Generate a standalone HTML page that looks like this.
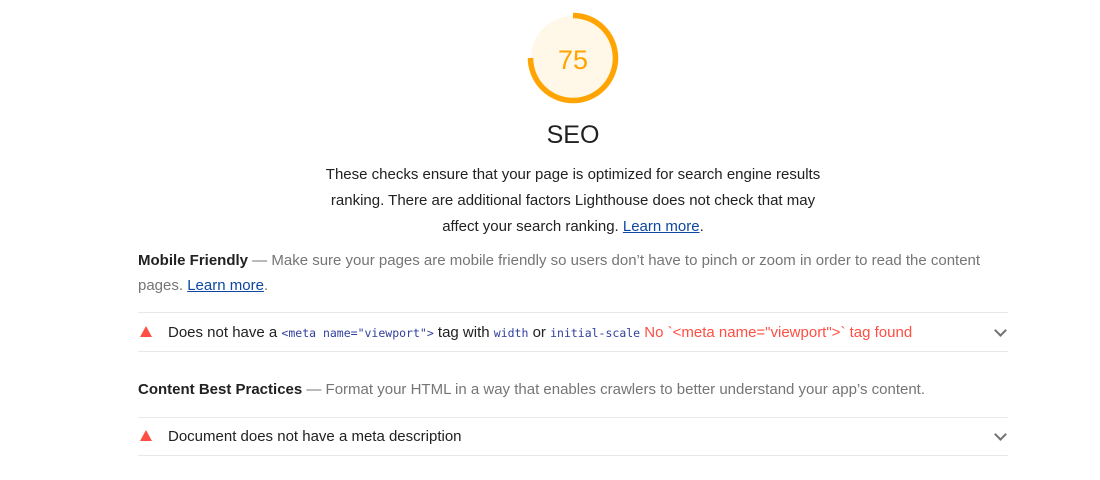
<!DOCTYPE html>
<html><head><style>
body{margin:0;background:#fff;font-family:"Liberation Sans",sans-serif;color:#212121;width:1100px;height:480px;overflow:hidden;position:relative}
.a{position:absolute}
code{font-family:"DejaVu Sans Mono","Liberation Mono",monospace;font-size:11.5px;color:#303f9f}
a{color:#0d47a1;text-decoration:underline}
.hr{position:absolute;left:138px;width:870px;height:1px;background:#e8e8e8}
.tri{position:absolute;width:0;height:0;border-left:6px solid transparent;border-right:6px solid transparent;border-bottom:11px solid #ff4e42}
.chev{position:absolute;width:7px;height:7px;border-right:2px solid #707070;border-bottom:2px solid #707070;transform:rotate(45deg)}
</style></head><body>
<svg class="a" style="left:527px;top:12px" width="92" height="92" viewBox="0 0 92 92">
<circle cx="46" cy="46" r="42" fill="#fff7e8"/>
<circle cx="46" cy="46" r="42.5" fill="none" stroke="#ffa400" stroke-width="5.5" stroke-dasharray="200 300" transform="rotate(-90 46 46)"/>
<text x="46" y="57" text-anchor="middle" font-family="Liberation Sans" font-size="27" fill="#ffa400">75</text>
</svg>
<div class="a" style="left:0;width:1146px;top:121px;text-align:center;font-size:25px;color:#212121">SEO</div>
<div class="a" style="left:315px;width:516px;top:162px;text-align:center;font-size:15px;line-height:26px;color:#212121">These checks ensure that your page is optimized for search engine results ranking. There are additional factors Lighthouse does not check that may affect your search ranking. <a>Learn more</a>.</div>
<div class="a" style="left:138px;width:860px;top:248px;font-size:15px;line-height:25px;color:#757575"><b style="color:#212121">Mobile Friendly</b> — Make sure your pages are mobile friendly so users don’t have to pinch or zoom in order to read the content pages. <a>Learn more</a>.</div>
<div class="hr" style="top:312px"></div>
<div class="tri" style="left:140px;top:326px"></div>
<div class="a" style="left:168px;top:324px;font-size:15px;white-space:nowrap">Does not have a <code>&lt;meta name="viewport"&gt;</code> tag with <code>width</code> or <code>initial-scale</code> <span style="color:#ff4e42">No `&lt;meta name="viewport"&gt;` tag found</span></div>
<div class="chev" style="left:996px;top:326px"></div>
<div class="hr" style="top:351px"></div>
<div class="a" style="left:138px;top:381px;font-size:15px;color:#757575"><b style="color:#212121">Content Best Practices</b> — Format your HTML in a way that enables crawlers to better understand your app’s content.</div>
<div class="hr" style="top:417px"></div>
<div class="tri" style="left:140px;top:430px"></div>
<div class="a" style="left:168px;top:428px;font-size:15px">Document does not have a meta description</div>
<div class="chev" style="left:996px;top:430px"></div>
<div class="hr" style="top:455px"></div>
</body></html>
